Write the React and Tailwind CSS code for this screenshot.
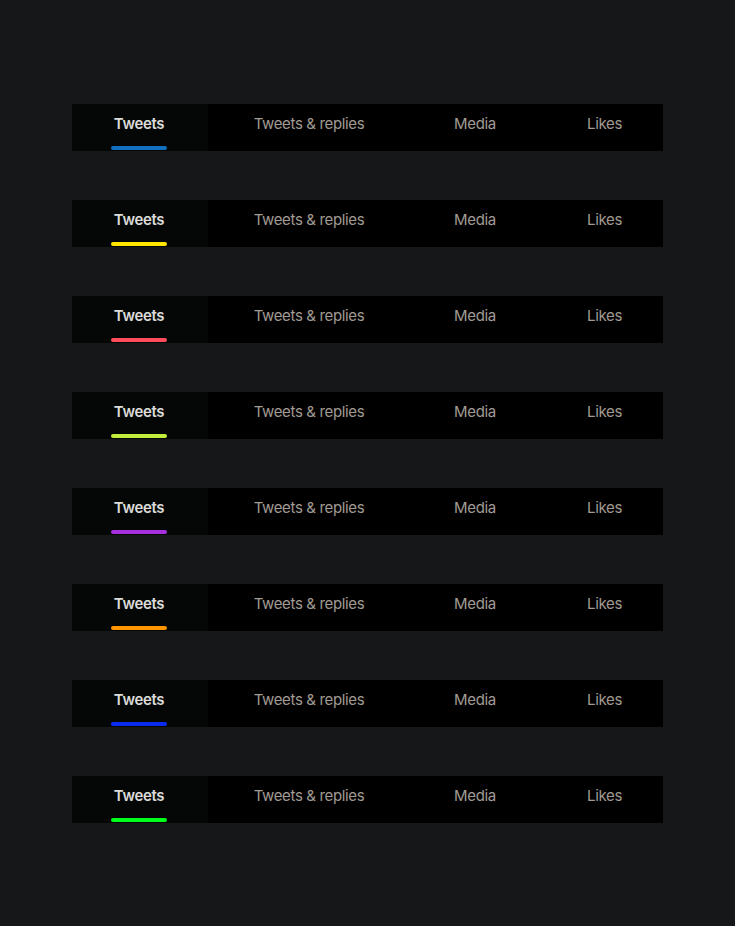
import React from "react";

const colors = [
  "bg-[#1170c0]",
  "bg-[#ffe600]",
  "bg-[#ff4d5e]",
  "bg-[#c1ee3a]",
  "bg-[#a82fe0]",
  "bg-[#ff9500]",
  "bg-[#0a2cf0]",
  "bg-[#00ff1a]",
];

function TabBar({ color }) {
  return (
    <div className="flex h-[47px] w-[591px] bg-black tracking-[-0.35px]" style={{ fontFamily: "Inter, 'Liberation Sans', sans-serif" }}>
      <div className="flex w-[136px] flex-col items-center bg-[#050706] pr-[2px] pt-[10px]">
        <span className="text-[15px] leading-[20px] font-semibold text-[#dcdcda]">Tweets</span>
        <span className={"mt-[12px] h-[4px] w-[56px] rounded-full " + color}></span>
      </div>
      <div className="flex w-[202px] justify-center pt-[10px]">
        <span className="text-[15px] leading-[20px] text-[#a09b93]">Tweets &amp; replies</span>
      </div>
      <div className="flex w-[130px] justify-center pt-[10px]">
        <span className="text-[15px] leading-[20px] text-[#a09b93]">Media</span>
      </div>
      <div className="flex flex-1 justify-center pl-[6px] pt-[10px]">
        <span className="text-[15px] leading-[20px] text-[#a09b93]">Likes</span>
      </div>
    </div>
  );
}

export default function App() {
  return (
    <div className="min-h-[926px] w-full bg-[#151719] pl-[72px] pt-[104px]">
      <div className="flex flex-col gap-[49px]">
        {colors.map((c, i) => (
          <TabBar key={i} color={c} />
        ))}
      </div>
    </div>
  );
}
